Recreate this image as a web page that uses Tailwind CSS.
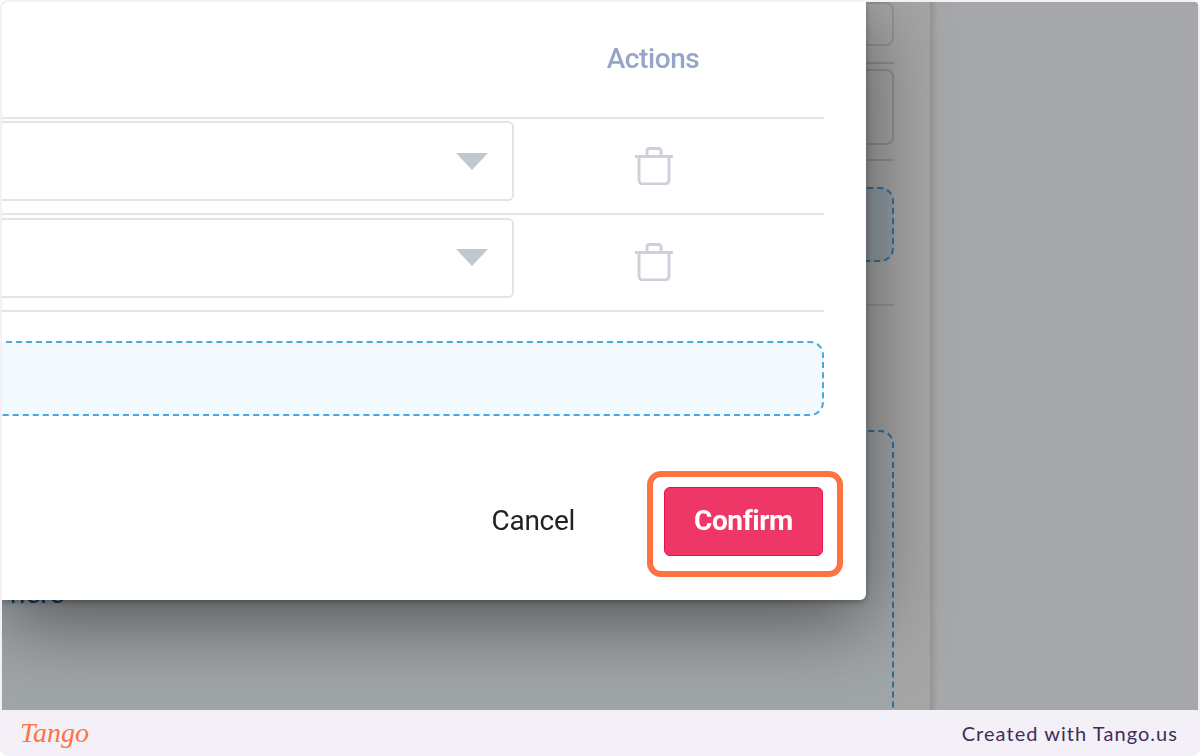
<!DOCTYPE html>
<html lang="en">
<head>
    <meta charset="UTF-8">
    <meta name="viewport" content="width=device-width, initial-scale=1.0">
    <title>Confirm</title>
    <script src="https://cdn.jsdelivr.net/npm/@tailwindcss/browser@4"></script>
</head>
<body class="bg-white font-['Roboto',sans-serif]">
    <div class="h-[756px] flex flex-col rounded-lg bg-[#f3f1f7] overflow-hidden">
        <!-- screenshot area -->
        <div class="relative h-[708px] mt-[2px] mx-[2px] rounded-t overflow-hidden flex">
            <!-- dimmed page behind the dialog -->
            <div class="w-[928px] shrink-0 bg-[#a5a5a5] pr-[36px] flex flex-col blur-[0.6px]">
                <div class="h-[44px] shrink-0 border-2 border-[#939393] rounded-lg"></div>
                <div class="h-[2px] shrink-0 mt-[16px] bg-[#8f8f8f]"></div>
                <div class="h-[76px] shrink-0 mt-[5px] border-2 border-[#8f8f8f] rounded-lg"></div>
                <div class="h-[2px] shrink-0 mt-[14px] bg-[#8f8f8f]"></div>
                <div class="h-[75px] shrink-0 mt-[26px] border-2 border-dashed border-[#2f6f9c] rounded-[14px] bg-[#929ea3]"></div>
                <div class="h-[2px] shrink-0 mt-[42px] bg-[#939393]"></div>
                <div class="h-[400px] shrink-0 mt-[124px] -ml-[16px] border-2 border-dashed border-[#2f6f9c] rounded-[14px] bg-[#a0a5a8] pl-[22px] pt-[147px]">
                    <p class="text-[28px] leading-[30px] text-[#0b3f73]">here</p>
                </div>
            </div>
            <div class="flex-1 bg-[#a6a7a8] bg-linear-to-r from-[#959595] to-[#a6a7a8] to-[3%]"></div>

            <!-- dialog -->
            <div class="absolute left-0 top-0 w-[864px] h-[598px] bg-white rounded-br-md overflow-hidden shadow-[0_2px_6px_rgba(0,0,0,0.3),0_20px_80px_rgba(0,0,0,0.5)] flex flex-col pr-[42px] blur-[0.4px]">
                <div class="h-[116.5px] shrink-0 border-b-2 border-[#e3e5e8] grid grid-cols-[512px_280px_30px] items-center">
                    <div></div>
                    <div class="text-center text-[28px] font-medium tracking-[-0.4px] text-[#97a5c9] pr-[2px]">Actions</div>
                </div>

                <div class="h-[96.5px] shrink-0 border-b-2 border-[#e3e5e8] grid grid-cols-[512px_280px_30px] items-center">
                    <div class="h-[80px] -mt-[9px] border-2 border-l-0 border-[#e2e4e8] rounded-r-md flex items-center justify-end pr-[24px]">
                        <svg width="32" height="17" viewBox="0 0 32 17"><polygon points="0,0 32,0 16,17" fill="#c0c6d2"/></svg>
                    </div>
                    <div class="flex justify-center">
                        <svg width="38" height="38" viewBox="0 0 38 38" fill="none" stroke="#cdd2da" stroke-width="3"><path d="M0 9.5H38"/><path d="M12 9V4a2.5 2.5 0 0 1 2.5-2.5h9A2.5 2.5 0 0 1 26 4v5"/><path d="M4 9.5V33a4 4 0 0 0 4 4h22a4 4 0 0 0 4-4V9.5"/></svg>
                    </div>
                </div>

                <div class="h-[96.5px] shrink-0 border-b-2 border-[#e3e5e8] grid grid-cols-[512px_280px_30px] items-center">
                    <div class="h-[80px] -mt-[9px] border-2 border-l-0 border-[#e2e4e8] rounded-r-md flex items-center justify-end pr-[24px]">
                        <svg width="32" height="17" viewBox="0 0 32 17"><polygon points="0,0 32,0 16,17" fill="#c0c6d2"/></svg>
                    </div>
                    <div class="flex justify-center">
                        <svg width="38" height="38" viewBox="0 0 38 38" fill="none" stroke="#cdd2da" stroke-width="3"><path d="M0 9.5H38"/><path d="M12 9V4a2.5 2.5 0 0 1 2.5-2.5h9A2.5 2.5 0 0 1 26 4v5"/><path d="M4 9.5V33a4 4 0 0 0 4 4h22a4 4 0 0 0 4-4V9.5"/></svg>
                    </div>
                </div>

                <div class="h-[75px] shrink-0 mt-[29px] -ml-[20px] border-2 border-dashed border-[#4aa8e0] rounded-[14px] bg-[#f2faff]"></div>

                <div class="flex items-center justify-end mt-[71px] pr-[1px]">
                    <button class="text-[28px] leading-[32px] text-[#222] tracking-[-0.3px] mr-[89px]">Cancel</button>
                    <button class="w-[159px] h-[69px] rounded-md bg-[#ee3766] border border-[#e8104f] text-white text-[28px] font-bold tracking-[-0.4px]">Confirm</button>
                </div>
            </div>

            <!-- step highlight -->
            <div class="absolute left-[645px] top-[469px] w-[196px] h-[106px] border-[6px] border-[#ff7342] rounded-[14px]"></div>
        </div>

        <!-- tango footer -->
        <div class="flex-1 flex items-center justify-between pl-[20px] pr-[22px]">
            <span class="font-['Liberation_Serif',serif] italic text-[28px] leading-none text-[#ff7342]">Tango</span>
            <span class="font-['Lato',sans-serif] text-[20px] tracking-[1.05px] text-[#3f2d5c]">Created with Tango.us</span>
        </div>
    </div>
</body>
</html>
